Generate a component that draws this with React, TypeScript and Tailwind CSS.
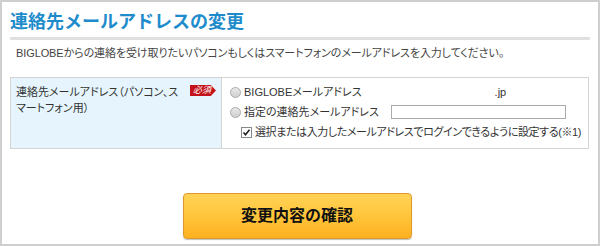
import React from 'react';

const jp = "font-['Liberation_Sans','Noto_Sans_CJK_JP',sans-serif]";

function Radio() {
  return (
    <span className="inline-block w-[11px] h-[11px] rounded-full border border-[#aaa] bg-gradient-to-b from-[#e8e8e8] to-[#d0d0d0] shrink-0" />
  );
}

function Checkbox() {
  return (
    <span className="inline-flex items-center justify-center w-[11px] h-[11px] border border-[#888] bg-white shrink-0">
      <svg width="9" height="9" viewBox="0 0 9 9">
        <path d="M1.5 4.5 L3.5 6.8 L7.5 1.8" fill="none" stroke="#222" strokeWidth="1.6" />
      </svg>
    </span>
  );
}

export default function App() {
  return (
    <div className={`${jp} w-[600px] h-[246px] border-2 border-[#cfcfcf] bg-white text-[#333] [font-feature-settings:'palt'] flex flex-col`}>
      <h1 className="mx-[8px] mt-[9px] pb-[3px] border-b-[3px] border-[#e0e0e0] text-[18px] leading-[23px] font-bold text-[#1e8ccb] [font-feature-settings:normal]">
        連絡先メールアドレスの変更
      </h1>
      <p className="ml-[14px] mt-[6px] text-[11px] leading-[14px] tracking-[-0.1px] text-[#444]">
        BIGLOBEからの連絡を受け取りたいパソコンもしくはスマートフォンのメールアドレスを入力してください。
      </p>
      <div className="mx-[8px] mt-[17px] w-[579px] h-[72px] flex border border-[#d4d4d4]">
        <div className="w-[211px] shrink-0 bg-[#e6f5fd] border-r border-[#d4d4d4] flex justify-between pl-[5px] pr-[5px] pt-[6px]">
          <div className="text-[11px] leading-[16px] text-[#333]">
            連絡先メールアドレス（パソコン、ス
            <br />
            マートフォン用）
          </div>
          <span className="mt-[1px] h-[11px] w-[26px] bg-[#c4121b] text-white text-[9px] leading-[11px] italic pl-[3px] [clip-path:polygon(0_0,80%_0,100%_50%,80%_100%,0_100%)]">
            必須
          </span>
        </div>
        <div className="flex-1 pl-[8px] pt-[4px] text-[11px] text-[#333] flex flex-col whitespace-nowrap">
          <div className="flex items-center gap-[3px] h-[20px]">
            <Radio />
            <span>BIGLOBEメールアドレス</span>
            <span className="ml-[130px]">.jp</span>
          </div>
          <div className="flex items-center gap-[3px] h-[20px]">
            <Radio />
            <span>指定の連絡先メールアドレス</span>
            <span className="ml-[9px] w-[175px] h-[14px] border border-[#aaa] bg-white" />
          </div>
          <div className="flex items-center gap-[3px] h-[20px] ml-[11px]">
            <Checkbox />
            <span className="tracking-[-0.4px]">選択または入力したメールアドレスでログインできるように設定する(※1)</span>
          </div>
        </div>
      </div>
      <div className="flex justify-center mt-[44px] pr-[6px]">
        <button className="w-[229px] h-[46px] rounded-[4px] border border-[#dd9a2a] bg-gradient-to-b from-[#ffd256] via-[#ffc53a] to-[#ffb01e] shadow-[0_1px_1px_rgba(0,0,0,0.25)] text-[16px] font-bold text-[#111] [font-feature-settings:normal]">
          変更内容の確認
        </button>
      </div>
    </div>
  );
}
